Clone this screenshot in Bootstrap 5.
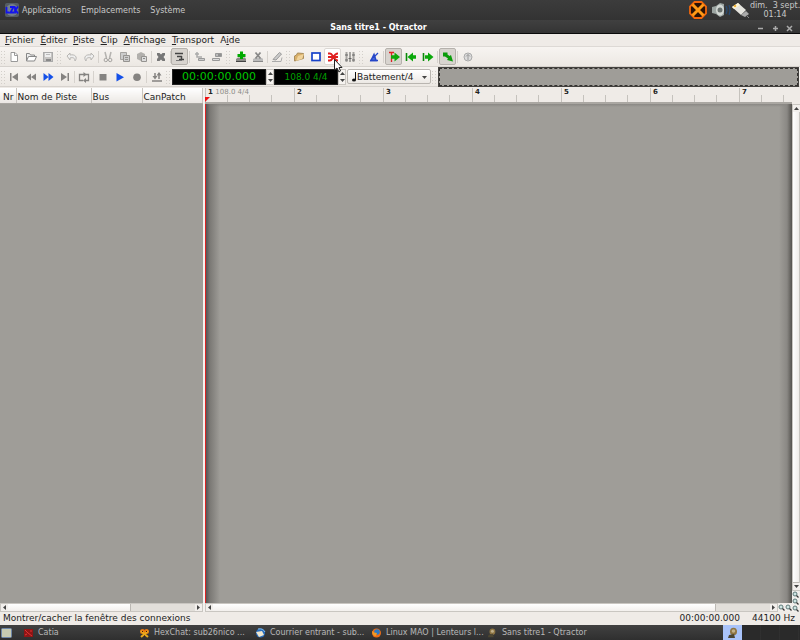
<!DOCTYPE html>
<html lang="fr">
<head>
<meta charset="utf-8">
<meta name="viewport" content="width=device-width, initial-scale=1">
<title>Sans titre1 - Qtractor</title>
<link href="https://cdn.jsdelivr.net/npm/bootstrap@5.3.0/dist/css/bootstrap.min.css" rel="stylesheet">
<script src="https://cdn.jsdelivr.net/npm/bootstrap@5.3.0/dist/js/bootstrap.bundle.min.js"></script>
<style>
body{font-family:"DejaVu Sans",sans-serif;font-size:9px;line-height:12px;color:#222;background:#efebe7}
button,select,input{font:inherit;color:inherit}
a{color:inherit;text-decoration:none}
svg{display:block;flex:none}
.desk-panel{height:20px;background:linear-gradient(#3c3c3c,#333);color:#c8c8c8;font-size:8px;line-height:9px;padding-left:5px}
.desk-menu{gap:10px;margin-left:3px}
.desk-clock{width:50px}
.win-title{height:14px;background:linear-gradient(#404040,#343434);border-bottom:1px solid #0a0a0a;color:#fff;font-size:8px;line-height:10px;padding:3px 7px 0 0}
.win-side{width:36px}
.win-side button{border:0;background:none;padding:0;color:#aaa}
.menu-row{height:13px;padding-left:5px;gap:6px;border-bottom:1px solid #ddd9d5}
.tool-row{height:20px;background:linear-gradient(#f7f4f1,#ece8e3);border-bottom:1px solid #d6d2cd}
.tool-row button.tb{width:17px;height:17px;border:1px solid transparent;border-radius:2px;background:none;padding:0;display:flex;align-items:center;justify-content:center;flex:none;color:#858381}
.tool-row button.on{background:#d8d4cf;border-color:#b5b1ac}
.tool-row button.hot{background:#fff;border-color:#dcd8d4}
.grip{width:7px;height:14px;flex:none;background:radial-gradient(circle,#d3cfca 1px,transparent 1px) 0 0/3px 3px}
.grip-s{width:5px}
.gap-l{width:3px;height:12px;flex:none;background:linear-gradient(90deg,transparent 1px,#d6d2cd 1px,#d6d2cd 2px,transparent 2px)}
.gap-s{width:2px}
.lcd{height:16px;background:#000;color:#00c800;border:1px solid #222;border-radius:0;padding:0;text-align:center}
.lcd-time{width:94px;font-size:11px}
.lcd-tempo{width:64px;color:#00a000}
.spin{width:8px;height:16px;background:#f6f3f0;border:1px solid #cac6c1}
.spin button{border:0;background:none;padding:0;height:7px;width:6px;display:flex;align-items:center;justify-content:center}
.snap{width:84px;height:15px;margin-left:1px;border:1px solid #b9b5b0;border-radius:2px;background:linear-gradient(#fff,#ece8e4);position:relative}
.snap select{appearance:none;border:0;background:none;padding:0 0 0 9px;width:100%;height:13px;line-height:12px;outline:0}
.snap svg{position:absolute;pointer-events:none}
.snap .note{left:3px;top:2px}.snap .tri{right:3px;top:5px}
.thumb-view{height:20px;background:#9f9d98;border:1px solid #44423f;outline:1px dashed #33312f;outline-offset:-2px;margin-right:1px}
.work-area{padding-top:1px}
.tracks{width:203px;flex:none}
.splitter{width:2px;flex:none;background:#f4f1ee}
.gutter{width:8px;flex:none}
.head-row{height:16px;flex:none}
.track-table{table-layout:fixed;width:100%;border-collapse:collapse;height:16px}
.track-table th{font-weight:400;padding:2px 0 0 1px;border-right:1px solid #c9c5c0;border-bottom:1px solid #a9a6a1;background:linear-gradient(#fff,#ebe7e3);white-space:nowrap;overflow:hidden;line-height:12px}
.c-nr{width:16px}.c-name{width:75px}.c-bus{width:51px}
.track-table th:first-child{padding-left:3px}
.void{background:#9f9d98}
.canvas{background:linear-gradient(90deg,#555 0,#7b7975 4px,transparent 14px),linear-gradient(270deg,#55534f 0,#8a8884 5px,transparent 13px),linear-gradient(#8a8884,transparent 3px),#9f9d98;border-left:1px solid #d22}
.ruler{border-bottom:2px solid #aaa7a2;overflow:hidden;position:relative}
.bar-cell{width:89px;flex:none;height:14px;border-left:1px solid #c5c2bd;padding-left:2px;font-size:7px;line-height:9px;font-weight:700;white-space:nowrap;background:linear-gradient(90deg,transparent 21px,#c5c2bd 21px,#c5c2bd 22px,transparent 22px,transparent 43px,#c5c2bd 43px,#c5c2bd 44px,transparent 44px,transparent 65px,#c5c2bd 65px,#c5c2bd 66px,transparent 66px) 0 7px no-repeat}
.bar-cell span{font-weight:400;color:#8d8b88}
.play-mark{position:absolute;left:0;bottom:0}
.sbar{background:#e2dfda;border:1px solid #c9c6c1}
.sbar-h{height:9px;flex:none}
.sbar button,.zoomers button{border:0;padding:0;background:#f2efec;display:flex;align-items:center;justify-content:center;width:7px;height:7px;flex:none;color:#333}
.knob{background:linear-gradient(#fff,#f3f0ed);border-right:1px solid #bbb8b3}
.knob-l{width:123px}
.knob-r{width:503px}
.knob-v{background:linear-gradient(90deg,#fff,#f0edea);border-bottom:1px solid #bbb8b3}
.status{height:13px;padding:0 5px 0 3px;line-height:12px}
.status .rate{margin-left:12px}
.tasks{height:15px;background:linear-gradient(#414141,#2f2f2f);color:#b8b8b8;font-size:8px;padding-left:1px}
.tasks button{border:0;background:none;padding:0;text-align:left;white-space:nowrap;width:116px;gap:4px}
.tasks .first-task{width:116px;margin-left:10px}
.tray-on{width:19px;height:15px;background:#a9c3fa}
.tray-end{width:58px;height:15px;background:repeating-linear-gradient(90deg,#2a2a2a 0,#2a2a2a 18px,#353535 19px)}
.pointer{position:absolute;left:334px;top:59px;z-index:5}
</style>
</head>
<body>
<svg width="0" height="0" class="position-absolute" aria-hidden="true">
<defs>
<symbol id="new" viewBox="0 0 12 12"><path d="M3 1.500h4l2.500 2.500v6.500h-6.500z" fill="#fff" stroke="#999"/><path d="M6.500 1.500v3h3" fill="none" stroke="#999"/></symbol>
<symbol id="open" viewBox="0 0 12 12"><path d="M1.500 10V2.500h3l1 1.500h4v2" fill="#eee" stroke="#888"/><path d="M1.500 10l2-4.500h8L9.500 10z" fill="#fff" stroke="#888"/></symbol>
<symbol id="save" viewBox="0 0 12 12"><rect x="1.500" y="1.500" width="9" height="9" fill="#c6c4c2" stroke="#aaa"/><path d="M3 2h6v4H3z" fill="#eee"/><path d="M4 3.500h4" stroke="#bbb"/><path d="M4 8h5v2H4z" fill="#888"/></symbol>
<symbol id="undo" viewBox="0 0 12 12"><path d="M1 5l3-3v2c5-1 8 2 5 6 0-3-2-4-5-3v2z" fill="#eee" stroke="#b8b6b3"/></symbol>
<symbol id="redo" viewBox="0 0 12 12"><path d="M11 5L8 2v2C3 3 0 6 3 10c0-3 2-4 5-3v2z" fill="#eee" stroke="#b8b6b3"/></symbol>
<symbol id="cut" viewBox="0 0 12 12"><path d="M3 1l1.500 6M9 1L7.500 7" stroke="#b5b3b0" stroke-width="1.500"/><circle cx="3.800" cy="9" r="1.700" fill="none" stroke="#a5a3a0"/><circle cx="8.200" cy="9" r="1.700" fill="none" stroke="#a5a3a0"/></symbol>
<symbol id="copy" viewBox="0 0 12 12"><path d="M1.500 1.500h6v7h-6z" fill="#ccc" stroke="#a5a3a0"/><path d="M4.500 4.500h6v6h-6z" fill="#ccc" stroke="#959390"/><path d="M6 6.500h3M6 8.500h3" stroke="#959390"/></symbol>
<symbol id="paste" viewBox="0 0 12 12"><path d="M1 3l4-2 4 2v5l-4 2-4-2z" fill="#b2b0ad"/><path d="M5.500 5.500h5v5h-5z" fill="#ddd" stroke="#959390"/><path d="M7 7.500h2" stroke="#888"/></symbol>
<symbol id="del" viewBox="0 0 12 12"><path d="M2 2h2.500L6 3.500 7.500 2H10v2L8.500 6 10 8v2H7.500L6 8.500 4.500 10H2V8l1.500-2L2 4z" fill="#777"/></symbol>
<symbol id="trk" viewBox="0 0 12 12"><path d="M1 2.500h8M3 5.500h5M7.500 5v3M5 8.500h5" stroke="#444" stroke-width="1.500"/><path d="M2 9.500h6" stroke="#777"/></symbol>
<symbol id="trka" viewBox="0 0 12 12"><path d="M3 1v5h5M1 3h4" fill="none" stroke="#aaa" stroke-width="1.500"/><path d="M4.500 7.500h6v2h-6z" fill="#ccc" stroke="#999"/></symbol>
<symbol id="trkb" viewBox="0 0 12 12"><path d="M4.500 2.500h6v3h-6z" fill="#bbb" stroke="#999"/><path d="M1.500 7.500h7v2h-7z" fill="#ddd" stroke="#999"/><path d="M7 4h3" stroke="#666"/></symbol>
<symbol id="add" viewBox="0 0 12 12"><path d="M1 8l2-1.500h7L11 8v2H1z" fill="#8a8a86"/><path d="M1 10.500h10" stroke="#444"/><path d="M5 .500h3V3h2.500v3H8v2H5V6H2.500V3H5z" fill="#0a0"/></symbol>
<symbol id="rem" viewBox="0 0 12 12"><path d="M1 8l2-1h7l1 1v2.500H1z" fill="#bbb"/><path d="M1 10.500h10" stroke="#888"/><path d="M3.500 1.500l5 6M8.500 1.500l-5 6" stroke="#888" stroke-width="1.800"/></symbol>
<symbol id="edit" viewBox="0 0 12 12"><path d="M2 8.500L8.500 1.500l2 1.500L5 9z" fill="#ccc" stroke="#999"/><path d="M1 10.500h9l1-4" fill="none" stroke="#aaa"/></symbol>
<symbol id="files" viewBox="0 0 12 12"><path d="M1.500 10V5l2-1 1-2 6 .500v5z" fill="#d9b06a" stroke="#a98d5c"/><path d="M3 10L5 5l6-2-2 5z" fill="#f0d39b"/></symbol>
<symbol id="msg" viewBox="0 0 12 12"><rect x="2" y="2" width="8" height="7.500" fill="#fff" stroke="#1742c9" stroke-width="1.700"/></symbol>
<symbol id="conn" viewBox="0 0 12 12"><path d="M1 2.500h2c3 0 3 7 8 7M1 9.500h2c3 0 3-7 8-7M1 6h10" fill="none" stroke="#e02020" stroke-width="2"/></symbol>
<symbol id="mix" viewBox="0 0 12 12"><path d="M2.500 1v10M6 1v10M9.500 1v10" stroke="#a5a3a0" stroke-width="2"/><path d="M1 4h3M4.500 7.500h3M8 4h3M1 9h3M8 9h3" stroke="#666"/></symbol>
<symbol id="metro" viewBox="0 0 12 12"><path d="M3 9.500L6 3.500l2 6z" fill="#5577e0" stroke="#2546c8" stroke-width="1.600"/><path d="M5 7l5-5M2 9.500h8" stroke="#2546c8" stroke-width="1.300"/></symbol>
<symbol id="follow" viewBox="0 0 12 12"><path d="M1 1.500h5M3.500 2v9" stroke="#d22" stroke-width="1.300"/><path d="M3 4.300h3.500V1.500L12 6l-5.500 4.500V7.700H3z" fill="#0aa80a"/></symbol>
<symbol id="fwd" viewBox="0 0 12 12"><path d="M1.500 2v8" stroke="#0a8a0a" stroke-width="1.600"/><path d="M3 4.300h3V1.500L11.500 6 6 10.500V7.700H3z" fill="#0aa80a"/></symbol>
<symbol id="bck" viewBox="0 0 12 12"><path d="M1.500 2v8" stroke="#0a8a0a" stroke-width="1.600"/><path d="M11 4.300H8V1.500L2.500 6 8 10.500V7.700h3z" fill="#0aa80a"/></symbol>
<symbol id="auto" viewBox="0 0 12 12"><path d="M1 1.500h4.500v2L7.500 5l1.500-1 2 6.500-6-1.500 1-1.500L3 5.500H1z" fill="#0a9c0a"/></symbol>
<symbol id="panic" viewBox="0 0 12 12"><circle cx="6" cy="6" r="4" fill="#ddd" stroke="#aaa"/><path d="M6 9V3.500M4 5.500l2-2 2 2" fill="none" stroke="#999"/></symbol>
<symbol id="start" viewBox="0 0 12 12"><path d="M2 2h1.500v8H2zM10 2v8L4 6z" fill="#858381"/></symbol>
<symbol id="rw" viewBox="0 0 12 12"><path d="M6 2.500v7L1.500 6zM11 2.500v7L6 6z" fill="#858381"/></symbol>
<symbol id="ff" viewBox="0 0 12 12"><path d="M1.500 2v8L6.500 6zM6.500 2v8l5-4z" fill="#1450e8"/></symbol>
<symbol id="end" viewBox="0 0 12 12"><path d="M8.500 2H10v8H8.500zM2 2v8l6-4z" fill="#858381"/></symbol>
<symbol id="loop" viewBox="0 0 12 12"><path d="M5 9.500H1.500v-6H6M7 3.500h3.500v6H8" fill="none" stroke="#858381" stroke-width="1.300"/><path d="M5.500 1v5L8.500 3.500zM8 7v5L5 9.500z" fill="#858381"/></symbol>
<symbol id="stop" viewBox="0 0 12 12"><rect x="2.500" y="3" width="7" height="6.500" fill="#858381"/></symbol>
<symbol id="play" viewBox="0 0 12 12"><path d="M2.500 2v8.500L10 6.200z" fill="#1450e8"/></symbol>
<symbol id="rec" viewBox="0 0 12 12"><circle cx="6" cy="6.200" r="3.800" fill="#858381"/></symbol>
<symbol id="punch" viewBox="0 0 12 12"><path d="M1 10h10M4 2v5M8 8V2" stroke="#858381" stroke-width="1.500"/><path d="M1.500 5h5L4 8.500zM5.500 4.500h5L8 1z" fill="#858381"/></symbol>
<symbol id="up" viewBox="0 0 5 5"><path d="M0 4h5L2.500 1z" fill="#444"/></symbol>
<symbol id="down" viewBox="0 0 5 5"><path d="M0 1h5L2.500 4z" fill="#444"/></symbol>
<symbol id="left" viewBox="0 0 5 5"><path d="M4 0v5L1 2.500z" fill="#444"/></symbol>
<symbol id="right" viewBox="0 0 5 5"><path d="M1 0v5l3-2.500z" fill="#444"/></symbol>
<symbol id="lens" viewBox="0 0 7 7"><circle cx="3" cy="3" r="2" fill="#cfe4e2" stroke="#607a7a"/><path d="M4.500 4.500L6.500 6.500" stroke="#333" stroke-width="1.200"/></symbol>
<symbol id="bird" viewBox="0 0 12 12"><ellipse cx="6.500" cy="4.500" rx="3.500" ry="3.800" fill="#8d7442"/><circle cx="6.500" cy="4" r="1.800" fill="#c0b08a"/><path d="M2 8l5-1 1 4H1z" fill="#4c4632"/></symbol>
</defs>
</svg>

<div class="d-flex flex-column vh-100 overflow-hidden">
<header class="desk-panel d-flex align-items-center">
  <svg width="14" height="14" viewBox="0 0 14 14" aria-hidden="true"><rect width="14" height="14" rx="2" fill="#555d64"/><circle cx="7" cy="7" r="6" fill="#75818c"/><path d="M1.500 4v5.500h3M5 4h3.500L5.500 9.500H9M10 3.500v7M13 3.500L10.500 7l2.500 3.500" fill="none" stroke="#1212ee" stroke-width="1.800"/></svg>
  <nav class="desk-menu d-flex me-auto"><a href="#">Applications</a><a href="#">Emplacements</a><a href="#">Système</a></nav>
  <svg width="18" height="18" viewBox="0 0 18 18" aria-hidden="true"><path d="M5.500 1h7l4.500 4.500v7L12.500 17h-7L1 12.500v-7z" fill="#2a1206" stroke="#f4680c" stroke-width="1.800"/><path d="M3.500 3.500l11 11M14.500 3.500l-11 11" stroke="#ff9a16" stroke-width="3"/></svg>
  <svg width="20" height="16" viewBox="0 0 20 16" class="ms-1" aria-hidden="true"><path d="M1 5l4-1 4-3 4 1v11l-4 2-4-3-4-1z" fill="#9ca5a2"/><ellipse cx="9" cy="8" rx="4" ry="5.500" fill="#d3d8d4"/><circle cx="9" cy="8" r="2.500" fill="#69716e"/><path d="M15 4q2 4 0 8M18 3q2 5 0 10" fill="none" stroke="#294a70" stroke-width="1.300"/></svg>
  <svg width="19" height="17" viewBox="0 0 19 17" aria-hidden="true"><path d="M1 5l6-4 8 7-5 5z" fill="#e6e5df"/><path d="M1 5l6-4 2 2-6 4z" fill="#fff7d8"/><path d="M10 13l5-4 3 3-4 3z" fill="#aaa"/><path d="M15 13l3 3" stroke="#888"/><circle cx="4" cy="4" r="1.300" fill="#f0b43c"/></svg>
  <div class="desk-clock text-center text-nowrap">dim.&nbsp; 3 sept.<br>01:14</div>
</header>
<div class="win-title d-flex align-items-center">
  <span class="flex-fill text-center fw-bold">Sans titre1 - Qtractor</span>
  <span class="win-side d-flex justify-content-between">
    <button aria-label="Réduire"><svg width="7" height="7" viewBox="0 0 7 7"><path d="M1 3.500h5" stroke="#aaa" stroke-width="1.500"/></svg></button>
    <button aria-label="Agrandir"><svg width="7" height="7" viewBox="0 0 7 7"><path d="M1 3.500h5M3.500 1v5" stroke="#aaa" stroke-width="1.500"/></svg></button>
    <button aria-label="Fermer"><svg width="7" height="7" viewBox="0 0 7 7"><path d="M1 1l5 5M6 1L1 6" stroke="#aaa" stroke-width="1.500"/></svg></button>
  </span>
</div>
<nav class="menu-row d-flex">
  <a href="#"><u>F</u>ichier</a><a href="#"><u>É</u>diter</a><a href="#"><u>P</u>iste</a><a href="#"><u>C</u>lip</a><a href="#"><u>A</u>ffichage</a><a href="#"><u>T</u>ransport</a><a href="#">A<u>i</u>de</a>
</nav>
<div class="tool-row d-flex align-items-center" role="toolbar" aria-label="Édition">
  <i class="grip grip-s"></i>
  <button class="tb" aria-label="Nouveau"><svg width="12" height="12"><use href="#new"/></svg></button>
  <button class="tb" aria-label="Ouvrir"><svg width="12" height="12"><use href="#open"/></svg></button>
  <button class="tb" aria-label="Enregistrer"><svg width="12" height="12"><use href="#save"/></svg></button>
  <i class="grip"></i>
  <button class="tb" aria-label="Annuler"><svg width="12" height="12"><use href="#undo"/></svg></button>
  <button class="tb" aria-label="Refaire"><svg width="12" height="12"><use href="#redo"/></svg></button>
  <i class="gap-l gap-s"></i>
  <button class="tb" aria-label="Couper"><svg width="12" height="12"><use href="#cut"/></svg></button>
  <button class="tb" aria-label="Copier"><svg width="12" height="12"><use href="#copy"/></svg></button>
  <button class="tb" aria-label="Coller"><svg width="12" height="12"><use href="#paste"/></svg></button>
  <i class="gap-l gap-s"></i>
  <button class="tb" aria-label="Supprimer"><svg width="12" height="12"><use href="#del"/></svg></button>
  <i class="gap-l gap-s"></i>
  <button class="tb on" aria-label="Mode clip"><svg width="12" height="12"><use href="#trk"/></svg></button>
  <i class="gap-l"></i>
  <button class="tb" aria-label="Mode plage"><svg width="12" height="12"><use href="#trka"/></svg></button>
  <button class="tb" aria-label="Mode rectangle"><svg width="12" height="12"><use href="#trkb"/></svg></button>
  <i class="grip"></i>
  <button class="tb" aria-label="Ajouter une piste"><svg width="12" height="12"><use href="#add"/></svg></button>
  <button class="tb" aria-label="Retirer la piste"><svg width="12" height="12"><use href="#rem"/></svg></button>
  <i class="gap-l gap-s"></i>
  <button class="tb" aria-label="Modifier"><svg width="12" height="12"><use href="#edit"/></svg></button>
  <i class="grip grip-s"></i>
  <button class="tb" aria-label="Fichiers"><svg width="12" height="12"><use href="#files"/></svg></button>
  <button class="tb" aria-label="Messages"><svg width="12" height="12"><use href="#msg"/></svg></button>
  <button class="tb hot" aria-label="Connexions"><svg width="12" height="12"><use href="#conn"/></svg></button>
  <button class="tb" aria-label="Mixeur"><svg width="12" height="12"><use href="#mix"/></svg></button>
  <i class="grip"></i>
  <button class="tb" aria-label="Métronome"><svg width="12" height="12"><use href="#metro"/></svg></button>
  <i class="gap-l"></i>
  <button class="tb on" aria-label="Suivre la tête"><svg width="12" height="12"><use href="#follow"/></svg></button>
  <button class="tb" aria-label="Retour"><svg width="12" height="12"><use href="#bck"/></svg></button>
  <button class="tb" aria-label="Continuer"><svg width="12" height="12"><use href="#fwd"/></svg></button>
  <i class="gap-l"></i>
  <button class="tb on" aria-label="Automatique"><svg width="12" height="12"><use href="#auto"/></svg></button>
  <i class="gap-l"></i>
  <button class="tb" aria-label="Panique"><svg width="12" height="12"><use href="#panic"/></svg></button>
</div>
<div class="tool-row d-flex align-items-center" role="toolbar" aria-label="Transport">
  <i class="grip grip-s"></i>
  <button class="tb" aria-label="Début"><svg width="12" height="12"><use href="#start"/></svg></button>
  <button class="tb" aria-label="Rembobiner"><svg width="12" height="12"><use href="#rw"/></svg></button>
  <button class="tb" aria-label="Avance rapide"><svg width="12" height="12"><use href="#ff"/></svg></button>
  <button class="tb" aria-label="Fin"><svg width="12" height="12"><use href="#end"/></svg></button>
  <i class="gap-l gap-s"></i>
  <button class="tb" aria-label="Boucle"><svg width="12" height="12"><use href="#loop"/></svg></button>
  <i class="gap-l gap-s"></i>
  <button class="tb" aria-label="Arrêt"><svg width="12" height="12"><use href="#stop"/></svg></button>
  <button class="tb" aria-label="Lecture"><svg width="12" height="12"><use href="#play"/></svg></button>
  <button class="tb" aria-label="Enregistrement"><svg width="12" height="12"><use href="#rec"/></svg></button>
  <i class="gap-l"></i>
  <button class="tb" aria-label="Punch"><svg width="12" height="12"><use href="#punch"/></svg></button>
  <i class="grip"></i>
  <input class="lcd lcd-time" value="00:00:00.000" aria-label="Position">
  <span class="spin"><button aria-label="Position plus"><svg width="5" height="5"><use href="#up"/></svg></button><button aria-label="Position moins"><svg width="5" height="5"><use href="#down"/></svg></button></span>
  <input class="lcd lcd-tempo" value="108.0 4/4" aria-label="Tempo">
  <span class="spin"><button aria-label="Tempo plus"><svg width="5" height="5"><use href="#up"/></svg></button><button aria-label="Tempo moins"><svg width="5" height="5"><use href="#down"/></svg></button></span>
  <span class="snap flex-shrink-0">
    <svg class="note" width="6" height="10" viewBox="0 0 6 10"><path d="M4.500 0v8" stroke="#111"/><ellipse cx="3" cy="8" rx="2" ry="1.500" fill="#111"/></svg>
    <select aria-label="Magnétisme"><option>Battement/4</option></select>
    <svg class="tri" width="5" height="5"><use href="#down"/></svg>
  </span>
  <i class="grip"></i>
  <div class="thumb-view flex-fill"></div>
</div>

<main class="work-area d-flex flex-fill overflow-hidden">
  <section class="tracks d-flex flex-column">
    <div class="head-row">
      <table class="track-table"><thead><tr><th class="c-nr">Nr</th><th class="c-name">Nom de Piste</th><th class="c-bus">Bus</th><th>CanPatch</th></tr></thead></table>
    </div>
    <div class="void flex-fill"></div>
    <div class="sbar sbar-h d-flex"><button aria-label="Gauche"><svg width="5" height="5"><use href="#left"/></svg></button><div class="knob knob-l"></div><button class="ms-auto" aria-label="Droite"><svg width="5" height="5"><use href="#right"/></svg></button></div>
  </section>
  <div class="splitter"></div>
  <section class="d-flex flex-column flex-fill overflow-hidden">
    <div class="head-row ruler d-flex">
      <div class="bar-cell">1 <span>108.0 4/4</span></div><div class="bar-cell">2</div><div class="bar-cell">3</div><div class="bar-cell">4</div><div class="bar-cell">5</div><div class="bar-cell">6</div><div class="bar-cell">7</div>
      <svg class="play-mark" width="5" height="5" viewBox="0 0 5 5"><path d="M0 0h5L0 5z" fill="#e11"/></svg>
    </div>
    <div class="canvas flex-fill"></div>
    <div class="d-flex">
      <div class="sbar sbar-h d-flex flex-fill"><button aria-label="Gauche"><svg width="5" height="5"><use href="#left"/></svg></button><div class="knob knob-r"></div><button class="ms-auto" aria-label="Droite"><svg width="5" height="5"><use href="#right"/></svg></button></div>
      <div class="zoomers d-flex align-items-center"><button aria-label="Zoom horizontal avant"><svg width="7" height="7"><use href="#lens"/></svg></button><button aria-label="Zoom horizontal arrière"><svg width="7" height="7"><use href="#lens"/></svg></button></div>
    </div>
  </section>
  <aside class="gutter d-flex flex-column">
    <div class="head-row"></div>
    <div class="sbar d-flex flex-column flex-fill"><button aria-label="Haut"><svg width="5" height="5"><use href="#up"/></svg></button><div class="knob-v flex-fill"></div><button aria-label="Bas"><svg width="5" height="5"><use href="#down"/></svg></button></div>
    <div class="zoomers"><button aria-label="Zoom avant"><svg width="7" height="7"><use href="#lens"/></svg></button><button aria-label="Zoom arrière"><svg width="7" height="7"><use href="#lens"/></svg></button><button aria-label="Zoom normal"><svg width="7" height="7"><use href="#lens"/></svg></button></div>
  </aside>
</main>
<footer class="status d-flex"><span class="me-auto">Montrer/cacher la fenêtre des connexions</span><span>00:00:00.000</span><span class="rate">44100 Hz</span></footer>
<nav class="tasks d-flex align-items-center" aria-label="Tâches">
  <svg width="11" height="10" viewBox="0 0 11 10" aria-hidden="true"><rect x=".5" y=".5" width="10" height="9" rx="1" fill="#c7cbb2" stroke="#6e86a8"/></svg>
  <button class="first-task d-flex align-items-center"><svg width="12" height="10" viewBox="0 0 12 10"><rect x="2" y="1" width="9" height="8" fill="#8e1515"/><path d="M3 2l3 3 4 3M3 7l2-1M8 3h2" stroke="#d33" fill="none"/></svg>Catia</button>
  <button class="d-flex align-items-center"><svg width="12" height="10" viewBox="0 0 12 10"><circle cx="4.500" cy="3.500" r="2.500" fill="#e77712"/><circle cx="8.500" cy="3.500" r="2.500" fill="#e77712"/><path d="M3 9l7-6M10 9L3 3" stroke="#e9a91c" stroke-width="2"/><path d="M4 3l1 1M9 3L8 4M6 8h1" stroke="#411"/></svg>HexChat: sub26nico ...</button>
  <button class="d-flex align-items-center"><svg width="12" height="10" viewBox="0 0 12 10"><circle cx="6.500" cy="5" r="4.500" fill="#286dbe"/><path d="M2 4l6-1 2 4-5 2z" fill="#eee6cf"/><path d="M4 1q5-1 7 3" stroke="#84c1f2" fill="none"/></svg>Courrier entrant - sub...</button>
  <button class="d-flex align-items-center"><svg width="12" height="10" viewBox="0 0 12 10"><circle cx="6.500" cy="5" r="4.500" fill="#ee6c15"/><circle cx="7" cy="4" r="2.800" fill="#2c79c4"/><path d="M2 3q2 2 5 2l-1 3q-4 0-4-5z" fill="#f29925"/></svg>Linux MAO | Lenteurs l...</button>
  <button class="d-flex align-items-center me-auto"><svg width="12" height="10"><use href="#bird"/></svg>Sans titre1 - Qtractor</button>
  <span class="tray-on d-flex align-items-center justify-content-center"><svg width="12" height="12"><use href="#bird"/></svg></span>
  <span class="tray-end"></span>
</nav>
</div>
<svg class="pointer" width="9" height="14" viewBox="0 0 9 14" aria-hidden="true"><path d="M.5.500v10.500l2.500-2 2 4 1.500-1-1.500-3.500h3z" fill="#fff" stroke="#222"/></svg>
</body>
</html>
